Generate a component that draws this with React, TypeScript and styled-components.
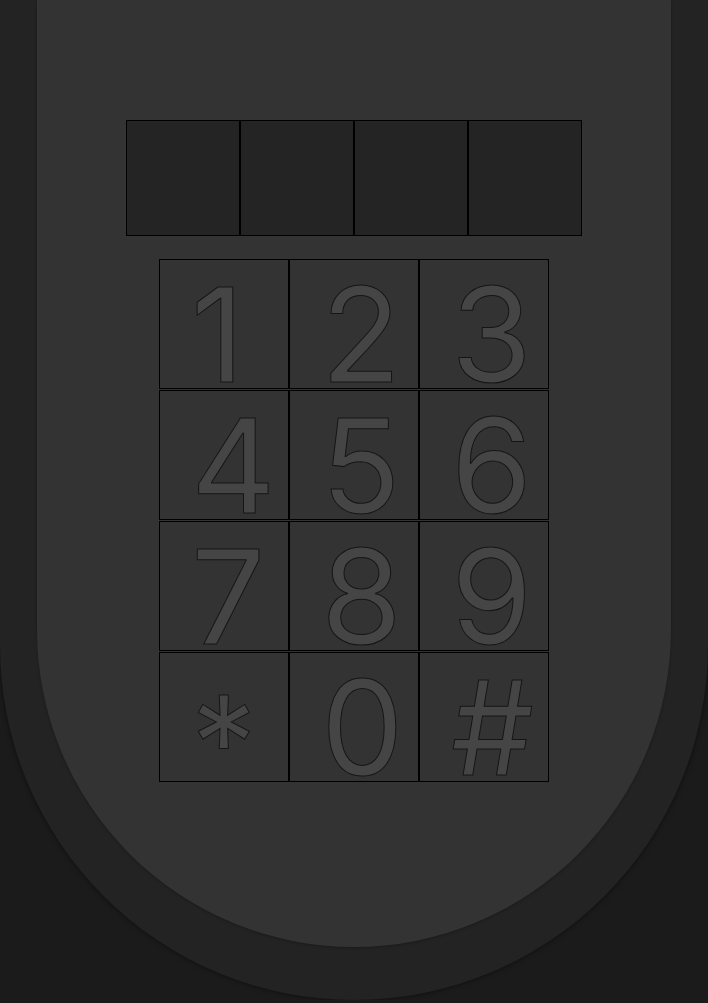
import React from "react";
import styled, { createGlobalStyle } from "styled-components";

const GlobalStyle = createGlobalStyle`
  html, body {
    margin: 0;
    padding: 0;
    background: #1b1b1b;
    font-family: Inter, "Liberation Sans", Arial, sans-serif;
  }
`;

const Phone = styled.div`
  box-sizing: border-box;
  width: 100%;
  height: 1000px;
  padding: 0 37px;
  background: #232323;
  border-radius: 0 0 354px 354px;
  box-shadow: 0 0 5px rgba(0, 0, 0, 0.55);
`;

const Face = styled.div`
  box-sizing: border-box;
  height: 947px;
  padding-top: 120px;
  background: #333333;
  border-radius: 0 0 317px 317px;
  box-shadow: 0 1px 3px rgba(0, 0, 0, 0.25);
  display: flex;
  flex-direction: column;
  align-items: center;
`;

const Display = styled.div`
  display: flex;
`;

const DisplayCell = styled.div`
  box-sizing: border-box;
  width: 114px;
  height: 116px;
  border: 1px solid #000;
  background: #242424;
`;

const Keypad = styled.div`
  margin-top: 23px;
  display: grid;
  grid-template-columns: repeat(3, 130px);
  grid-auto-rows: 130px;
  row-gap: 1px;
`;

const Key = styled.div<{ $lowered?: boolean }>`
  box-sizing: border-box;
  border: 1px solid #000;
  padding-left: 31px;
  padding-top: ${(p) => (p.$lowered ? "15px" : "0")};
  background: #333333;
  overflow: visible;
  text-align: left;
  font-family: Inter, "Liberation Sans", sans-serif;
  font-size: 131px;
  line-height: 1.15;
  color: #454545;
  -webkit-text-stroke: 1px #151515;
  user-select: none;
`;

const keys = ["1", "2", "3", "4", "5", "6", "7", "8", "9", "*", "0", "#"];

export default function App() {
  return (
    <>
      <GlobalStyle />
      <Phone>
        <Face>
          <Display>
            {[0, 1, 2, 3].map((i) => (
              <DisplayCell key={i} />
            ))}
          </Display>
          <Keypad>
            {keys.map((k) => (
              <Key key={k} $lowered={k === "*"}>
                {k}
              </Key>
            ))}
          </Keypad>
        </Face>
      </Phone>
    </>
  );
}
